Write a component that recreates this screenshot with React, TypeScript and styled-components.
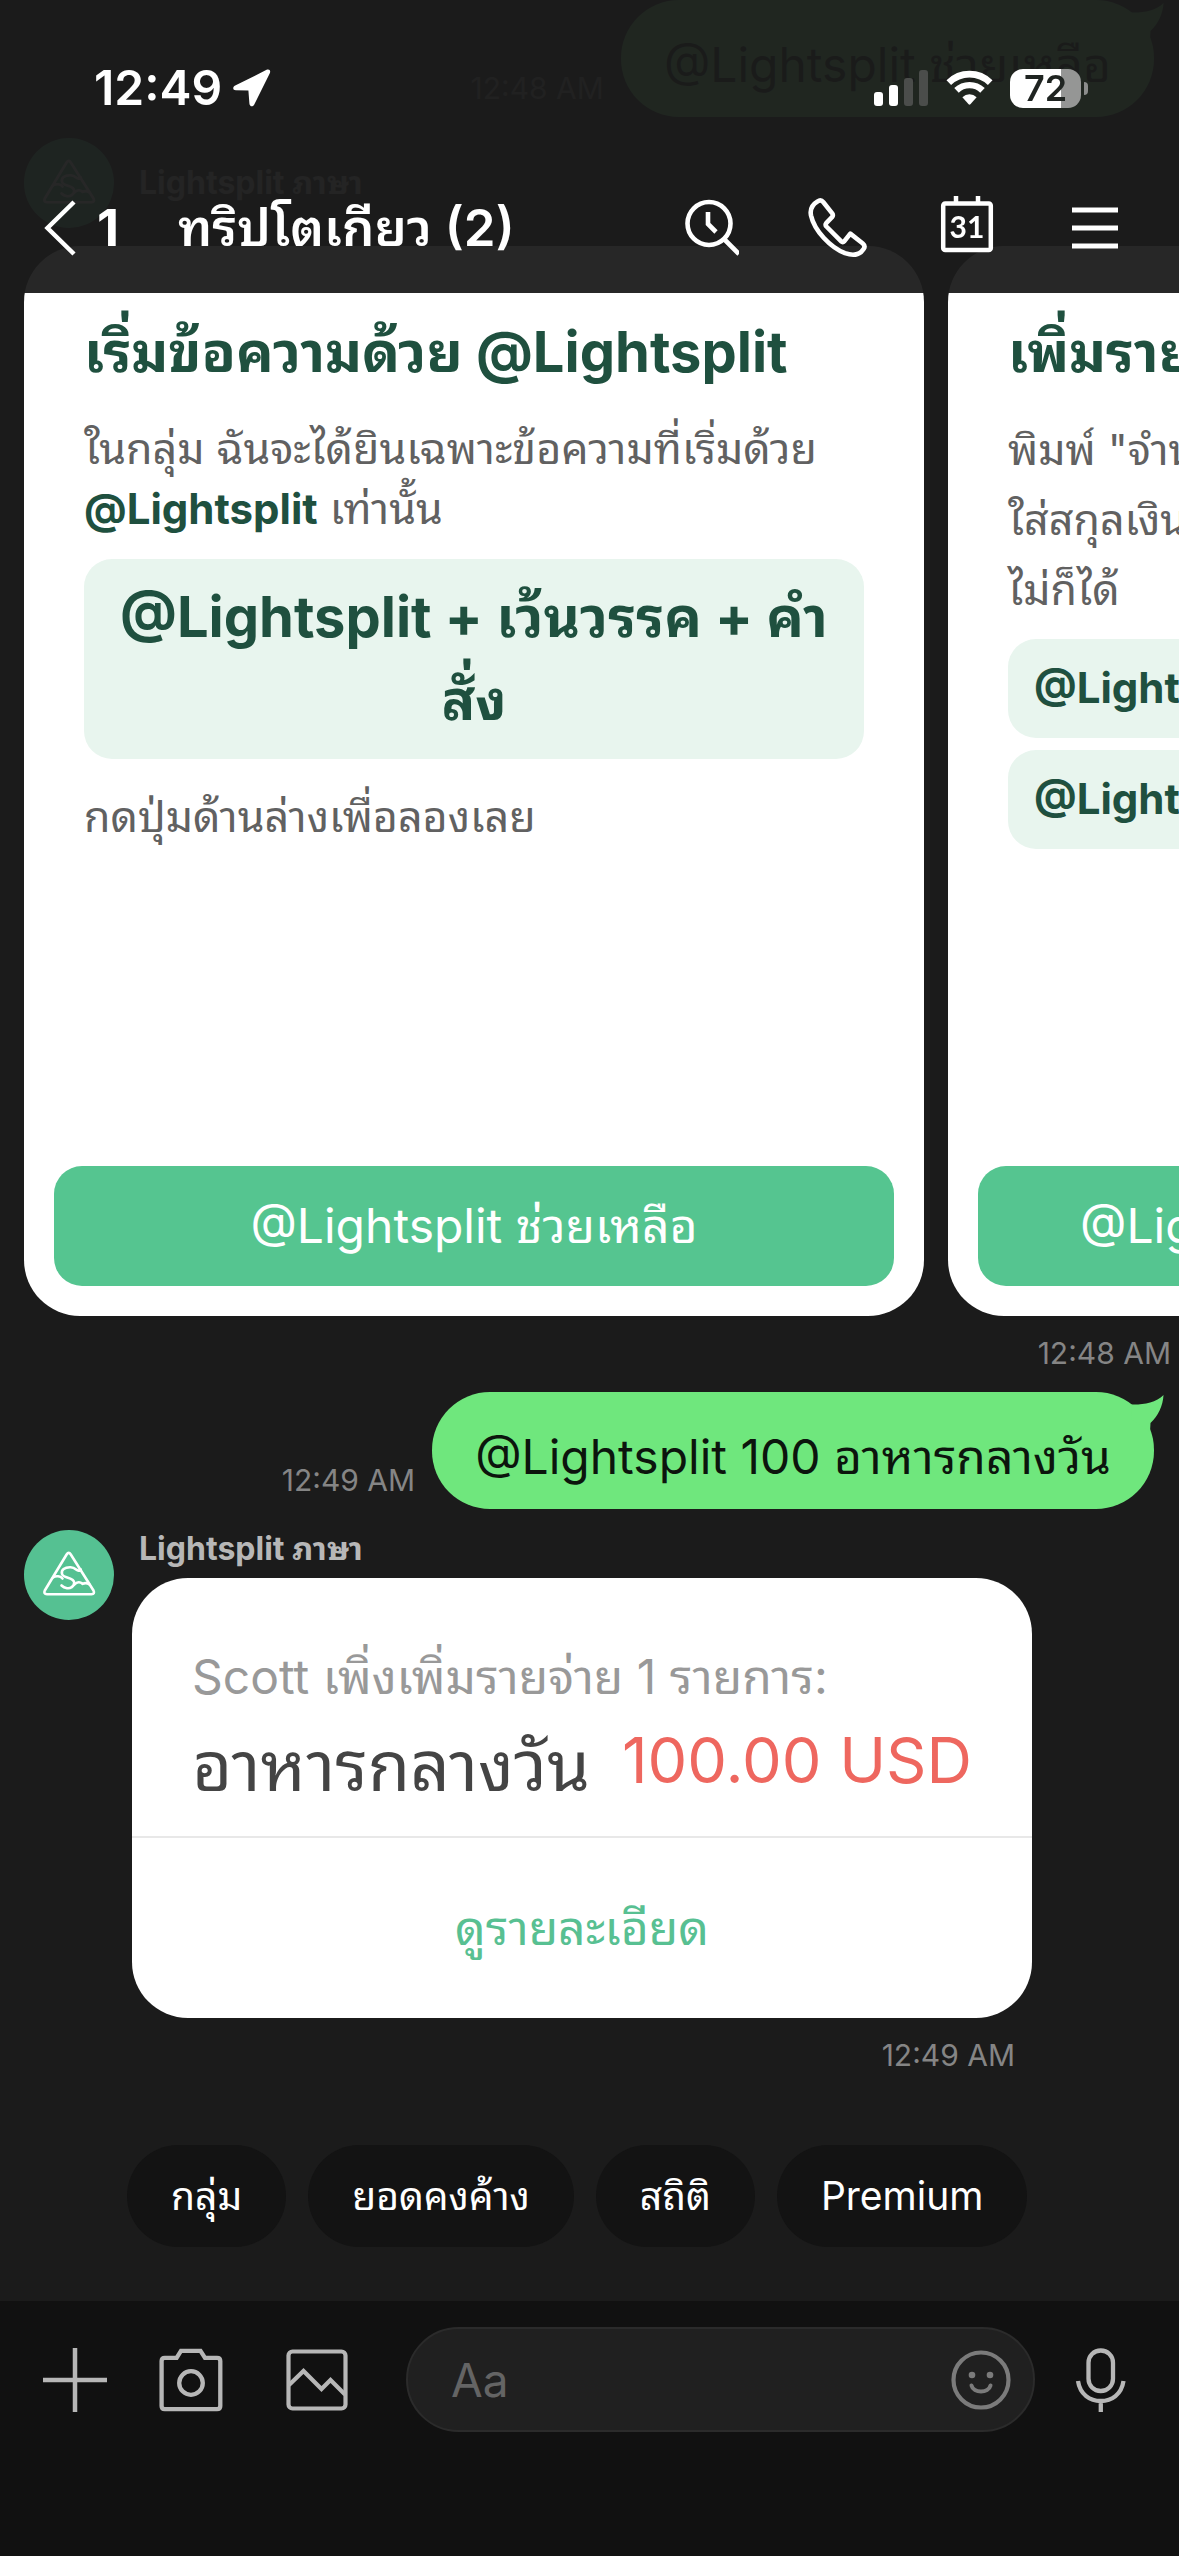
import React from "react";
import styled, { createGlobalStyle } from "styled-components";

const GlobalStyle = createGlobalStyle`
  *, *::before, *::after { box-sizing: border-box; }
  html { background: #111; }
  body {
    margin: 0;
    font-family: Inter, "Noto Sans Thai Looped", Loma, Garuda, "Noto Sans Thai", "Noto Sans", sans-serif;
    -webkit-font-smoothing: antialiased;
    overflow-x: hidden;
  }
  button, input { font: inherit; color: inherit; border: 0; background: none; padding: 0; margin: 0; }
  button { cursor: pointer; }
  h1, h2, p { margin: 0; }
  svg { display: block; }
`;

const Screen = styled.div`
  min-height: 100vh;
  display: flex;
  flex-direction: column;
  background: #1b1b1b;
  overflow: hidden;
`;

/* ---------- header ---------- */

const Header = styled.header`
  position: fixed;
  top: 0;
  left: 0;
  right: 0;
  z-index: 10;
  background: rgba(27, 27, 27, 0.95);
  color: #fff;
`;

const StatusBar = styled.div`
  display: flex;
  align-items: center;
  justify-content: space-between;
  height: 163px;
  padding: 13px 98px 0 94px;
`;

const StatusGroup = styled.div<{ $gap: number }>`
  display: flex;
  align-items: center;
  gap: ${(p) => p.$gap}px;
`;

const Clock = styled.span`
  font-size: 48px;
  line-height: 60px;
  font-weight: 600;
`;

const Battery = styled.div`
  position: relative;
  display: flex;
  align-items: center;
  justify-content: center;
  width: 71px;
  height: 39px;
  border-radius: 13px;
  background: linear-gradient(to right, #fff 72%, #959695 72%);
  color: #1f2421;
  font-size: 36px;
  line-height: 39px;
  font-weight: 600;

  &::after {
    content: "";
    position: absolute;
    left: 74px;
    top: 13px;
    width: 4px;
    height: 13px;
    border-radius: 0 6px 6px 0;
    background: #8c8d8c;
  }
`;

const NavBar = styled.nav`
  display: flex;
  align-items: center;
  height: 130px;
  padding-right: 20px;
`;

const BackButton = styled.button`
  display: flex;
  align-items: center;
  gap: 21px;
  width: 178px;
  padding-left: 44px;
  font-size: 51px;
  line-height: 64px;
  font-weight: 700;
`;

const ChatTitle = styled.h1`
  flex: 1;
  min-width: 0;
  white-space: nowrap;
  font-size: 51px;
  line-height: 64px;
  font-weight: 600;
`;

const NavButton = styled.button`
  display: grid;
  place-items: center;
  width: 128px;
  height: 100px;
`;

/* ---------- conversation ---------- */

const Conversation = styled.main`
  flex: 1;
  display: flex;
  flex-direction: column;
`;

const SentRow = styled.div`
  display: flex;
  align-items: flex-end;
  justify-content: flex-end;
  gap: 17px;
  padding-right: 25px;
  margin-bottom: 21px;
`;

const Bubble = styled.p`
  position: relative;
  padding: 33px 43px 20px;
  border-radius: 58px;
  background: #6fe77d;
  color: #0c150d;
  font-size: 48px;
  line-height: 64px;
  white-space: nowrap;
`;

const Tail = styled.svg`
  position: absolute;
  top: 0;
  right: -10px;
`;

const Time = styled.time<{ $inset?: number }>`
  display: block;
  padding: 0 ${(p) => p.$inset ?? 0}px 0 0;
  color: #858585;
  font-size: 30px;
  line-height: 36px;
  text-align: right;
`;

const SentTime = styled(Time)`
  padding-bottom: 11px;
`;

const SenderRow = styled.div<{ $centered?: boolean }>`
  display: flex;
  align-items: ${(p) => (p.$centered ? "center" : "flex-start")};
  gap: 18px;
  padding-left: 24px;
`;

const SenderName = styled.p`
  padding-left: 7px;
  color: #b7b7b7;
  font-size: 32px;
  line-height: 38px;
  font-weight: 700;
`;

const Carousel = styled.div`
  display: flex;
  gap: 24px;
  padding: 0 24px;
  margin: 18px 0 19px;
  overflow: hidden;
`;

const GuideCard = styled.article`
  flex: 0 0 900px;
  display: flex;
  flex-direction: column;
  min-height: 1070px;
  padding: 74px 30px 30px;
  border-radius: 56px;
  background: #fff;
`;

const GuideBody = styled.div`
  display: flex;
  flex-direction: column;
  padding: 0 30px;
`;

const GuideTitle = styled.h2<{ $gap: number }>`
  margin-bottom: ${(p) => p.$gap}px;
  color: #1f503f;
  font-size: 56px;
  line-height: 64px;
  font-weight: 700;
  white-space: nowrap;
`;

const GuideText = styled.p<{ $line: number }>`
  color: #616161;
  font-size: 43px;
  line-height: ${(p) => p.$line}px;
  white-space: nowrap;
`;

const Mention = styled.strong`
  color: #1f503f;
  font-size: 42px;
  font-weight: 700;
`;

const Formula = styled.p`
  margin: 20px 0 27px;
  padding: 17px 16px;
  border-radius: 28px;
  background: #e8f5ee;
  color: #1f503f;
  font-size: 56px;
  line-height: 83px;
  font-weight: 700;
  text-align: center;
`;

const Examples = styled.div`
  display: flex;
  flex-direction: column;
  gap: 12px;
  margin-top: 15px;
`;

const Example = styled.p`
  padding: 19px 26px 20px;
  border-radius: 28px;
  background: #e8f5ee;
  color: #1f503f;
  font-size: 42px;
  line-height: 60px;
  font-weight: 700;
`;

const GuideButton = styled.button`
  height: 120px;
  margin-top: auto;
  border-radius: 28px;
  background: #55c590;
  color: #fff;
  font-size: 48px;
  line-height: 64px;
`;

const CarouselTime = styled(Time)`
  margin-bottom: 21px;
`;

const ReceivedColumn = styled.div`
  display: flex;
  flex-direction: column;
  gap: 10px;
  width: 900px;
`;

const ExpenseCard = styled.article`
  border-radius: 56px;
  background: #fff;
  overflow: hidden;
`;

const ExpenseBody = styled.div`
  padding: 67px 60px 21px;
  border-bottom: 2px solid #e8e8e8;
`;

const ExpenseNote = styled.p`
  color: #999;
  font-size: 48px;
  line-height: 64px;
`;

const ExpenseLine = styled.div`
  display: flex;
  justify-content: space-between;
  align-items: flex-start;
  margin-top: 8px;
  white-space: nowrap;
`;

const ExpenseName = styled.span`
  color: #444;
  font-size: 69px;
  line-height: 98px;
`;

const ExpenseAmount = styled.span`
  color: #ee675f;
  font-size: 63px;
  line-height: 86px;
`;

const DetailLink = styled.a`
  display: flex;
  align-items: center;
  justify-content: center;
  height: 180px;
  color: #58c092;
  font-size: 48px;
  line-height: 58px;
  text-decoration: none;
`;

const ExpenseTime = styled(Time)`
  margin-top: 9px;
`;

const Chips = styled.div`
  display: flex;
  gap: 22px;
  margin-top: auto;
  padding: 24px 24px 54px 127px;
`;

const Chip = styled.button`
  height: 102px;
  padding: 0 44px;
  border-radius: 51px;
  background: #131313;
  color: #fff;
  font-size: 39px;
  line-height: 50px;
  white-space: nowrap;
`;

/* ---------- composer ---------- */

const Composer = styled.footer`
  display: grid;
  grid-template-columns: 100px 132px 120px minmax(0, 1fr) 132px;
  align-items: start;
  height: 255px;
  padding: 26px 12px 0 25px;
  background: #111;
  color: #b7b7b7;
`;

const ToolButton = styled.button`
  display: grid;
  place-items: center;
  height: 105px;
`;

const Field = styled.div`
  display: flex;
  align-items: center;
  height: 105px;
  margin-left: 29px;
  padding: 0 22px 0 43px;
  border: 2px solid #2b2b2b;
  border-radius: 53px;
  background: #202020;
`;

const FieldInput = styled.input`
  flex: 1;
  min-width: 0;
  font-size: 46px;
  line-height: 60px;
  outline: none;

  &::placeholder { color: #646464; opacity: 1; }
`;

const EmojiButton = styled.button`
  color: #7b7b7b;
`;

/* ---------- drawings ---------- */

const LocationArrow = () => (
  <svg width="38" height="38" viewBox="0 0 38 38" fill="#fff" aria-hidden>
    <path d="M33.6 .8 2.2 16.6C-.8 18.2-.2 21 2.8 21.2L15.4 21.6 16.4 34.4C16.7 37.8 20 38.2 21.4 35.2L36.8 4.2C38 1.6 36.2-.4 33.6.8Z" />
  </svg>
);

const Signal = () => (
  <svg width="55" height="36" viewBox="0 0 55 36" fill="#fff" aria-hidden>
    <rect x="0" y="22" width="9" height="14" rx="3" />
    <rect x="15" y="15" width="9" height="21" rx="3" />
    <rect x="30" y="8" width="9" height="28" rx="3" fill="#4b4d4b" />
    <rect x="45" y="0" width="9" height="36" rx="3" fill="#4b4d4b" />
  </svg>
);

const Wifi = () => (
  <svg width="47" height="36" viewBox="0 0 47 36" fill="none" aria-hidden>
    <path d="M2.8 12.6a29.5 29.5 0 0 1 41.4 0" stroke="#fff" strokeWidth="6.6" />
    <path d="M10.5 20.4a18.6 18.6 0 0 1 26 0" stroke="#fff" strokeWidth="6.4" />
    <path d="M16.4 27.2a10.3 10.3 0 0 1 14.2 0L24.4 34.3c-.6.6-1.2.6-1.8 0Z" fill="#fff" />
  </svg>
);

const Chevron = () => (
  <svg width="32" height="56" viewBox="0 0 32 56" fill="none" stroke="#fff" strokeWidth="4.5" aria-hidden>
    <path d="M30 2 3.5 28 30 54" />
  </svg>
);

const SearchHistory = () => (
  <svg width="56" height="62" viewBox="0 2 56 62" fill="none" stroke="#fff" strokeWidth="4.6" aria-hidden>
    <circle cx="26" cy="28.500" r="21.500" />
    <path d="M25 17v12l8 8M41 44l15 15" />
  </svg>
);

const Phone = () => (
  <svg width="58" height="62" viewBox="2 0 58 62" fill="none" stroke="#fff" strokeWidth="4.6" strokeLinejoin="round" aria-hidden overflow="visible">
    <path d="M9.500 4.500C11.500 3 13.800 3.200 15.400 5.200L24.200 16.400C25.200 17.800 25 19 24 20.200L18.200 26.200C17.400 27.200 17.500 28.400 18.400 29.500L33 44.200C34.200 45.200 35.400 45.200 36.400 44.200L42.300 36.600 54.800 46.500C56.800 48.200 57 50 55.600 52C52 57.800 45 59 37 56.200C22.500 50.500 6.500 34 3 18.500C1.800 12.500 4.500 7.500 9.500 4.500Z" />
  </svg>
);

const CalendarDay = () => (
  <svg width="54" height="66" viewBox="0 0 54 66" fill="none" stroke="#fff" strokeWidth="4.5" aria-hidden>
    <rect x="3.200" y="8.500" width="47.600" height="46.500" rx="2" />
    <path d="M16 1v8M38 1v8" />
    <text x="27" y="42.500" textAnchor="middle" fill="#fff" stroke="none" fontFamily="Lato, Inter, sans-serif" fontSize="30" fontWeight="700">31</text>
  </svg>
);

const Menu = () => (
  <svg width="46" height="42" viewBox="0 0 46 42" stroke="#fff" strokeWidth="5" aria-hidden>
    <path d="M0 3h46M0 21h46M0 39h46" />
  </svg>
);

const Logo = () => (
  <svg width="90" height="90" viewBox="0 0 90 90" fill="none" aria-hidden>
    <circle cx="45" cy="45" r="45" fill="#55c192" />
    <g stroke="#fff" strokeWidth="2.600" strokeLinecap="round" strokeLinejoin="round">
      <path d="M42.600 24.500Q44.700 21.200 46.800 24.500L69.500 60.500Q71.200 64 67.500 64.200H23Q19.200 64 20.800 60.500Z" />
      <path d="M55.500 40.500C52 41.500 52.500 37.500 46.500 37.200C40.500 37 37 40.200 38 44C39.200 48.500 50 47 50.200 52.500C50.300 56.500 46 58.800 43 58.200C40.500 57.800 38.500 56.500 37.500 55.500" />
      <path d="M29 47.500C32 45.500 36.500 46 38.500 48.500M55.500 40.500L56.800 39.500M50.500 54.500C53 51.500 56.500 51.800 58.500 54C61 52.500 63.500 53 65.500 54.500" />
    </g>
  </svg>
);

const BubbleTail = () => (
  <Tail width="40" height="44" viewBox="0 0 40 44" aria-hidden>
    <path d="M7 12.500C18 13 32 11 39.500 3C39 14 34 24 26.500 31L26 40L8 28Z" fill="#6fe77d" />
  </Tail>
);

const Plus = () => (
  <svg width="64" height="64" viewBox="0 0 64 64" stroke="currentColor" strokeWidth="4.500" aria-hidden>
    <path d="M32 0v64M0 32h64" />
  </svg>
);

const Camera = () => (
  <svg width="64" height="64" viewBox="0 0 64 64" fill="none" stroke="currentColor" strokeWidth="4.300" aria-hidden>
    <path d="M5.800 9.800H17.600L22 2.800H41.500L46 9.800H58Q61.300 9.800 61.300 13V58Q61.300 61.200 58 61.200H5.800Q2.600 61.200 2.600 58V13Q2.600 9.800 5.800 9.800Z" />
    <circle cx="32" cy="35" r="11.800" />
  </svg>
);

const Picture = () => (
  <svg width="64" height="64" viewBox="0 0 64 64" fill="none" stroke="currentColor" strokeWidth="4.200" aria-hidden>
    <rect x="3.500" y="3.500" width="57" height="57" rx="4" />
    <path d="M4 37 18.500 23 36.500 41 45.500 32 60 46.500" />
  </svg>
);

const Smile = () => (
  <svg width="60" height="60" viewBox="0 0 60 60" fill="none" stroke="currentColor" aria-hidden>
    <circle cx="30" cy="30" r="27.500" strokeWidth="4.200" />
    <path d="M20.500 35.500C22.500 43.500 37.500 43.500 39.500 35.500" strokeWidth="4" strokeLinecap="round" />
    <circle cx="21" cy="25" r="3.300" fill="currentColor" stroke="none" />
    <circle cx="39" cy="25" r="3.300" fill="currentColor" stroke="none" />
  </svg>
);

const Mic = () => (
  <svg width="52" height="64" viewBox="0 0 52 64" fill="none" stroke="currentColor" strokeWidth="4.300" aria-hidden>
    <rect x="13.500" y="2.500" width="24.500" height="40.500" rx="12.200" />
    <path d="M3 33C5 46.500 15 53 25.800 53S46.500 46.500 48.500 33M25.800 53v11" />
  </svg>
);

/* ---------- screen ---------- */

const navActions = [
  { label: "ค้นหา", icon: <SearchHistory /> },
  { label: "โทร", icon: <Phone /> },
  { label: "ปฏิทิน", icon: <CalendarDay /> },
  { label: "เมนู", icon: <Menu /> },
];

const quickReplies = ["กลุ่ม", "ยอดคงค้าง", "สถิติ", "Premium"];

const SenderHeading = () => <SenderName>Lightsplit ภาษา</SenderName>;

export default function App() {
  return (
    <Screen>
      <GlobalStyle />
      <Header>
        <StatusBar>
          <StatusGroup $gap={11}>
            <Clock>12:49</Clock>
            <LocationArrow />
          </StatusGroup>
          <StatusGroup $gap={17}>
            <Signal />
            <Wifi />
            <Battery>72</Battery>
          </StatusGroup>
        </StatusBar>
        <NavBar>
          <BackButton>
            <Chevron />1
          </BackButton>
          <ChatTitle>ทริปโตเกียว (2)</ChatTitle>
          {navActions.map((action) => (
            <NavButton key={action.label} aria-label={action.label}>
              {action.icon}
            </NavButton>
          ))}
        </NavBar>
      </Header>

      <Conversation>
        <SentRow>
          <SentTime>12:48 AM</SentTime>
          <Bubble>
            @Lightsplit ช่วยเหลือ
            <BubbleTail />
          </Bubble>
        </SentRow>

        <SenderRow $centered>
          <Logo />
          <SenderHeading />
        </SenderRow>
        <Carousel>
          <GuideCard>
            <GuideBody>
              <GuideTitle $gap={34}>เริ่มข้อความด้วย @Lightsplit</GuideTitle>
              <GuideText $line={60}>
                ในกลุ่ม ฉันจะได้ยินเฉพาะข้อความที่เริ่มด้วย
                <br />
                <Mention>@Lightsplit</Mention> เท่านั้น
              </GuideText>
              <Formula>
                @Lightsplit + เว้นวรรค + คำ
                <br />
                สั่ง
              </Formula>
              <GuideText $line={60}>กดปุ่มด้านล่างเพื่อลองเลย</GuideText>
            </GuideBody>
            <GuideButton>@Lightsplit ช่วยเหลือ</GuideButton>
          </GuideCard>
          <GuideCard>
            <GuideBody>
              <GuideTitle $gap={30}>เพิ่มรายจ่าย</GuideTitle>
              <GuideText $line={70}>
                พิมพ์ "จำนวน
                <br />
                ใส่สกุลเงิน
                <br />
                ไม่ก็ได้
              </GuideText>
              <Examples>
                <Example>@Lightsplit</Example>
                <Example>@Lightsplit</Example>
              </Examples>
            </GuideBody>
            <GuideButton>@Lightsplit 100 อาหารกลางวัน</GuideButton>
          </GuideCard>
        </Carousel>
        <CarouselTime $inset={8}>12:48 AM</CarouselTime>

        <SentRow>
          <SentTime>12:49 AM</SentTime>
          <Bubble>
            @Lightsplit 100 อาหารกลางวัน
            <BubbleTail />
          </Bubble>
        </SentRow>

        <SenderRow>
          <Logo />
          <ReceivedColumn>
            <SenderHeading />
            <ExpenseCard>
              <ExpenseBody>
                <ExpenseNote>Scott เพิ่งเพิ่มรายจ่าย 1 รายการ:</ExpenseNote>
                <ExpenseLine>
                  <ExpenseName>อาหารกลางวัน</ExpenseName>
                  <ExpenseAmount>100.00 USD</ExpenseAmount>
                </ExpenseLine>
              </ExpenseBody>
              <DetailLink href="#details">ดูรายละเอียด</DetailLink>
            </ExpenseCard>
            <ExpenseTime $inset={17}>12:49 AM</ExpenseTime>
          </ReceivedColumn>
        </SenderRow>

        <Chips>
          {quickReplies.map((label) => (
            <Chip key={label}>{label}</Chip>
          ))}
        </Chips>
      </Conversation>

      <Composer>
        <ToolButton aria-label="เพิ่ม"><Plus /></ToolButton>
        <ToolButton aria-label="กล้อง"><Camera /></ToolButton>
        <ToolButton aria-label="รูปภาพ"><Picture /></ToolButton>
        <Field>
          <FieldInput type="text" placeholder="Aa" aria-label="Aa" />
          <EmojiButton aria-label="อีโมจิ"><Smile /></EmojiButton>
        </Field>
        <ToolButton aria-label="ไมโครโฟน"><Mic /></ToolButton>
      </Composer>
    </Screen>
  );
}
